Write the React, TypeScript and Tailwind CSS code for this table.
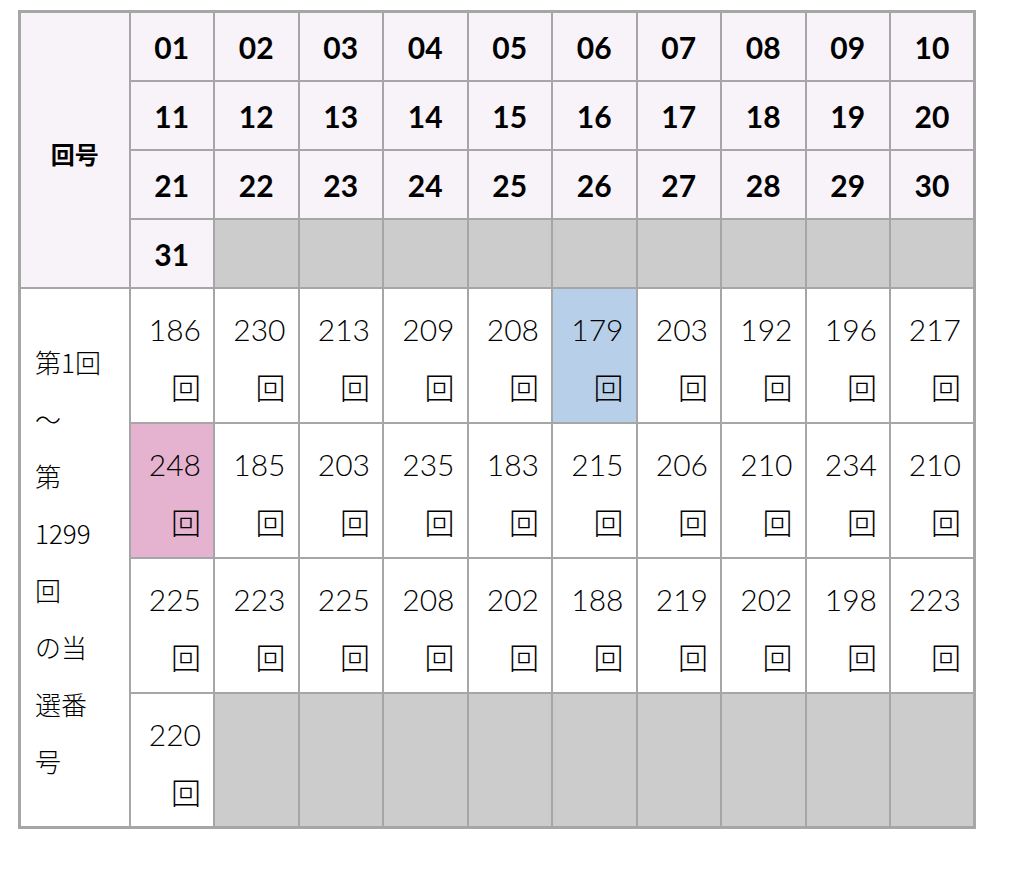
import React from 'react';

const head = [
  ['01', '02', '03', '04', '05', '06', '07', '08', '09', '10'],
  ['11', '12', '13', '14', '15', '16', '17', '18', '19', '20'],
  ['21', '22', '23', '24', '25', '26', '27', '28', '29', '30'],
  ['31'],
];

const counts = [
  [186, 230, 213, 209, 208, 179, 203, 192, 196, 217],
  [248, 185, 203, 235, 183, 215, 206, 210, 234, 210],
  [225, 223, 225, 208, 202, 188, 219, 202, 198, 223],
  [220],
];

const label = ['第1回', '～', '第', '1299', '回', 'の当', '選番', '号'];

const max = 248;
const min = 179;

const cell = 'border-2 border-[#a6a6a6]';

export default function App() {
  return (
    <div className="bg-white min-h-[877px] pt-[10px] pl-[18px]" style={{ fontFamily: '"Noto Sans CJK JP", "Noto Sans", sans-serif' }}>
      <table className="table-fixed border-collapse border-[3px] border-[#a6a6a6] w-[958px] text-black">
        <colgroup>
          <col className="w-[110px]" />
          {Array.from({ length: 10 }).map((_, i) => (
            <col key={i} />
          ))}
        </colgroup>
        <tbody>
          {head.map((row, r) => (
            <tr key={'h' + r} className="h-[69px]">
              {r === 0 && (
                <th rowSpan={4} className={`${cell} bg-[#f7f3f9] text-[24px] font-bold pt-[8px]`}>
                  回号
                </th>
              )}
              {Array.from({ length: 10 }).map((_, c) =>
                row[c] ? (
                  <th key={c} className={`${cell} bg-[#f7f3f9] text-[30px] font-bold pt-[3px] font-['Lato','Noto_Sans_CJK_JP',sans-serif]`}>
                    {row[c]}
                  </th>
                ) : (
                  <td key={c} className={`${cell} bg-[#cccccc]`} />
                )
              )}
            </tr>
          ))}
          {counts.map((row, r) => (
            <tr key={'b' + r} className="h-[135px]">
              {r === 0 && (
                <td rowSpan={4} className={`${cell} bg-white align-middle pl-[14px] pt-[8px] text-[26px] leading-[57px] font-light`}>
                  {label.map((t, i) => (
                    <div key={i}>{t}</div>
                  ))}
                </td>
              )}
              {Array.from({ length: 10 }).map((_, c) => {
                const n = row[c];
                if (!n) return <td key={c} className={`${cell} bg-[#cccccc]`} />;
                const bg = n === max ? 'bg-[#e5b3cf]' : n === min ? 'bg-[#b8cfe9]' : 'bg-white';
                return (
                  <td key={c} className={`${cell} ${bg} text-right pr-[12px] pt-[5px] text-[30px] leading-[57px] font-light`}>
                    <span className="font-['Lato','Noto_Sans_CJK_JP',sans-serif]">{n}</span>
                    <br />回
                  </td>
                );
              })}
            </tr>
          ))}
        </tbody>
      </table>
    </div>
  );
}
